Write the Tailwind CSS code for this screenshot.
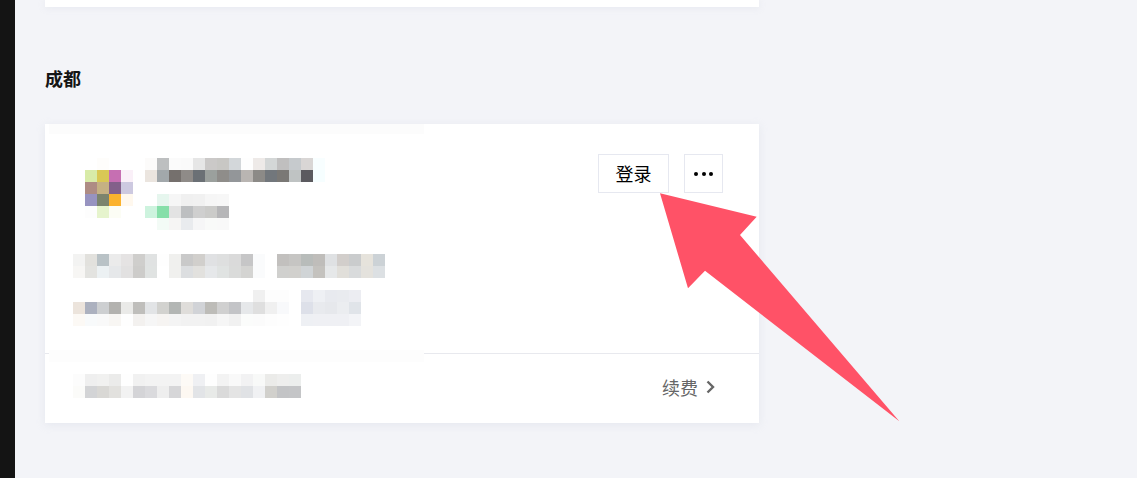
<!doctype html>
<html lang="zh-CN">
<head>
<meta charset="utf-8">
<script src="https://cdn.jsdelivr.net/npm/@tailwindcss/browser@4"></script>
<title>成都</title>
</head>
<body class="m-0">
<div class="relative flex h-[478px] w-[1137px] overflow-hidden bg-[#f3f4f8] font-['Noto_Sans_CJK_SC','Liberation_Sans',sans-serif]">
  <aside class="w-[15px] shrink-0 bg-[#141414]"></aside>
  <main class="w-[714px] ml-[30px] flex flex-col">
    <div class="h-[7px] bg-white shadow-[0_1px_6px_rgba(200,205,220,0.25)]"></div>
    <h2 class="mt-[58px] h-[26px] text-[18px] leading-[26px] font-bold text-[#151515]">成都</h2>
    <section class="relative mt-[33px] h-[299px] bg-white shadow-[0_2px_8px_rgba(200,205,220,0.3)] flex flex-col">
      <div class="h-[230px] shrink-0 flex justify-end items-start gap-[15px] pt-[30px] pr-[36px] border-b border-[#e8e9ee]">
        <button class="w-[71px] h-[39px] border border-[#e6e8f0] bg-white text-[18px] leading-[37px] text-black">登录</button>
        <button class="w-[39px] h-[39px] border border-[#e6e8f0] bg-white flex items-center justify-center gap-[3.5px]">
          <span class="size-[4px] rounded-full bg-black"></span><span class="size-[4px] rounded-full bg-black"></span><span class="size-[4px] rounded-full bg-black"></span>
        </button>
      </div>
      <div class="flex-1 flex items-center justify-end pr-[43px] pb-[4px]">
        <span class="text-[18px] leading-[26px] text-[#666666]">续费</span>
        <svg class="ml-[6px]" width="12" height="14" viewBox="0 0 12 14" fill="none"><path d="M3.5 1.5l5.5 5.5-5.5 5.5" stroke="#666666" stroke-width="2.4"/></svg>
      </div>

      <div class="absolute left-[4px] top-0 w-[375px] h-[238px] flex flex-col overflow-hidden bg-white blur-[0.4px]">
        <div class="h-[10px] w-full shrink-0 bg-[#fcfcfc]"></div>
        <div class="h-[24px] shrink-0"></div>
        <div class="flex h-3 shrink-0 ml-[48px]"><i class="w-3 bg-[#fefdfb]"></i><i class="w-3"></i><i class="w-3"></i><i class="w-3"></i><i class="w-3 bg-[#fcfbfa]"></i><i class="w-3 bg-[#bdbfc0]"></i><i class="w-3 bg-[#fbfbfb]"></i><i class="w-3 bg-[#fafafa]"></i><i class="w-3 bg-[#e6e6e6]"></i><i class="w-3 bg-[#cbc9c8]"></i><i class="w-3 bg-[#c8c7c4]"></i><i class="w-3 bg-[#d3d7da]"></i><i class="w-3 bg-[#fefefe]"></i><i class="w-3 bg-[#eeeae8]"></i><i class="w-3 bg-[#d4d7d7]"></i><i class="w-3 bg-[#c0bfbf]"></i><i class="w-3 bg-[#c6cacd]"></i><i class="w-3 bg-[#d9d6d5]"></i><i class="w-3 bg-[#f8feff]"></i></div>
        <div class="flex h-3 shrink-0 ml-[36px]"><i class="w-3 bg-[#d8eba8]"></i><i class="w-3 bg-[#d9c855]"></i><i class="w-3 bg-[#c66fb2]"></i><i class="w-3 bg-[#faf0f8]"></i><i class="w-3"></i><i class="w-3 bg-[#ebe5df]"></i><i class="w-3 bg-[#a2a8ab]"></i><i class="w-3 bg-[#75706d]"></i><i class="w-3 bg-[#8f8b88]"></i><i class="w-3 bg-[#6b7075]"></i><i class="w-3 bg-[#9ba09d]"></i><i class="w-3 bg-[#8f8d8a]"></i><i class="w-3 bg-[#939699]"></i><i class="w-3 bg-[#b9b5b2]"></i><i class="w-3 bg-[#8c8a87]"></i><i class="w-3 bg-[#72777c]"></i><i class="w-3 bg-[#7a7875]"></i><i class="w-3 bg-[#bfc3c3]"></i><i class="w-3 bg-[#5b5a5f]"></i><i class="w-3 bg-[#f6feff]"></i></div>
        <div class="flex h-3 shrink-0 ml-[36px]"><i class="w-3 bg-[#ae8c84]"></i><i class="w-3 bg-[#c5b183]"></i><i class="w-3 bg-[#83608a]"></i><i class="w-3 bg-[#cdc9e0]"></i></div>
        <div class="flex h-3 shrink-0 ml-[36px]"><i class="w-3 bg-[#9793c0]"></i><i class="w-3 bg-[#7b846d]"></i><i class="w-3 bg-[#fbb22d]"></i><i class="w-3 bg-[#fff8ee]"></i><i class="w-3"></i><i class="w-3"></i><i class="w-3 bg-[#e6f6ee]"></i><i class="w-3 bg-[#f6f6f6]"></i><i class="w-3 bg-[#f0f0f0]"></i><i class="w-3 bg-[#f1f1f1]"></i><i class="w-3 bg-[#f6f6f6]"></i><i class="w-3 bg-[#f7f7f7]"></i></div>
        <div class="flex h-3 shrink-0 ml-[36px]"><i class="w-3 bg-[#fdfdfd]"></i><i class="w-3 bg-[#e6f4cd]"></i><i class="w-3 bg-[#fcfdf5]"></i><i class="w-3"></i><i class="w-3"></i><i class="w-3 bg-[#cdf3de]"></i><i class="w-3 bg-[#86dfa9]"></i><i class="w-3 bg-[#e3e3e3]"></i><i class="w-3 bg-[#bdbfc1]"></i><i class="w-3 bg-[#cfcfcf]"></i><i class="w-3 bg-[#cbcbc9]"></i><i class="w-3 bg-[#b6b6b8]"></i></div>
        <div class="flex h-3 shrink-0 ml-[108px]"><i class="w-3 bg-[#f3fbf6]"></i><i class="w-3 bg-[#f6f5f4]"></i><i class="w-3 bg-[#e9ebee]"></i><i class="w-3 bg-[#f6f6f7]"></i><i class="w-3 bg-[#f9faf9]"></i><i class="w-3 bg-[#f9f9f9]"></i></div>
        <div class="h-[24px] shrink-0"></div>
        <div class="flex h-3 shrink-0 ml-[24px]"><i class="w-3 bg-[#f3f3f2]"></i><i class="w-3 bg-[#e2e1dd]"></i><i class="w-3 bg-[#b9c2c6]"></i><i class="w-3 bg-[#ebebeb]"></i><i class="w-3 bg-[#e5e3e3]"></i><i class="w-3 bg-[#cfcecc]"></i><i class="w-3 bg-[#e0e2e2]"></i><i class="w-3 bg-[#fefefe]"></i><i class="w-3 bg-[#f0f0ee]"></i><i class="w-3 bg-[#c9c9c9]"></i><i class="w-3 bg-[#d1cfcc]"></i><i class="w-3 bg-[#e0e1e3]"></i><i class="w-3 bg-[#dedfdf]"></i><i class="w-3 bg-[#dadada]"></i><i class="w-3 bg-[#c6c6c7]"></i><i class="w-3 bg-[#fafbfc]"></i><i class="w-3"></i><i class="w-3 bg-[#c2c0be]"></i><i class="w-3 bg-[#c6c5c3]"></i><i class="w-3 bg-[#b8bcba]"></i><i class="w-3 bg-[#bfbdba]"></i><i class="w-3 bg-[#dfe1e3]"></i><i class="w-3 bg-[#d2cecb]"></i><i class="w-3 bg-[#cacccd]"></i><i class="w-3 bg-[#e6e3dc]"></i><i class="w-3 bg-[#ccd2d6]"></i></div>
        <div class="flex h-3 shrink-0 ml-[24px]"><i class="w-3 bg-[#f7f6f4]"></i><i class="w-3 bg-[#e3e3e0]"></i><i class="w-3 bg-[#ecf1f3]"></i><i class="w-3 bg-[#e6e8ea]"></i><i class="w-3 bg-[#e2e1e1]"></i><i class="w-3 bg-[#cdccca]"></i><i class="w-3 bg-[#e0e3e2]"></i><i class="w-3"></i><i class="w-3 bg-[#f0f0ee]"></i><i class="w-3 bg-[#dcdee0]"></i><i class="w-3 bg-[#e2e1de]"></i><i class="w-3 bg-[#e6e8ea]"></i><i class="w-3 bg-[#e0e3e2]"></i><i class="w-3 bg-[#dadbda]"></i><i class="w-3 bg-[#d4d4d2]"></i><i class="w-3 bg-[#fafbfc]"></i><i class="w-3"></i><i class="w-3 bg-[#d0d0ce]"></i><i class="w-3 bg-[#d1d0cd]"></i><i class="w-3 bg-[#d0d4d6]"></i><i class="w-3 bg-[#c4c2be]"></i><i class="w-3 bg-[#e6e8e9]"></i><i class="w-3 bg-[#e1dfda]"></i><i class="w-3 bg-[#d9dbdc]"></i><i class="w-3 bg-[#e4e2dd]"></i><i class="w-3 bg-[#dce0e3]"></i></div>
        <div class="h-3 shrink-0"></div>
        <div class="flex h-3 shrink-0 ml-[204px]"><i class="w-3 bg-[#f0f0f0]"></i><i class="w-3 bg-[#fdfdfd]"></i><i class="w-3 bg-[#fdfdfd]"></i><i class="w-3"></i><i class="w-3 bg-[#e6e8ef]"></i><i class="w-3 bg-[#eef0f4]"></i><i class="w-3 bg-[#e8eaef]"></i><i class="w-3 bg-[#e9ebef]"></i><i class="w-3 bg-[#ecedf2]"></i></div>
        <div class="flex h-3 shrink-0 ml-[24px]"><i class="w-3 bg-[#ece4dc]"></i><i class="w-3 bg-[#acb1bf]"></i><i class="w-3 bg-[#cdcfd1]"></i><i class="w-3 bg-[#b3b2af]"></i><i class="w-3 bg-[#eaeae8]"></i><i class="w-3 bg-[#bfbebb]"></i><i class="w-3 bg-[#e2e4e6]"></i><i class="w-3 bg-[#d2d2cf]"></i><i class="w-3 bg-[#b3b6b4]"></i><i class="w-3 bg-[#dfddda]"></i><i class="w-3 bg-[#d1d3d7]"></i><i class="w-3 bg-[#bdbcb8]"></i><i class="w-3 bg-[#d0d0d0]"></i><i class="w-3 bg-[#c3c4c7]"></i><i class="w-3 bg-[#e6e8ea]"></i><i class="w-3 bg-[#dfdfdf]"></i><i class="w-3 bg-[#f0f0f0]"></i><i class="w-3 bg-[#f8f9fb]"></i><i class="w-3"></i><i class="w-3 bg-[#dde0e9]"></i><i class="w-3 bg-[#e8eaee]"></i><i class="w-3 bg-[#e6e8ec]"></i><i class="w-3 bg-[#ebedf0]"></i><i class="w-3 bg-[#e0e4e9]"></i></div>
        <div class="flex h-3 shrink-0 ml-[24px]"><i class="w-3 bg-[#fcf9f5]"></i><i class="w-3 bg-[#f8fafb]"></i><i class="w-3 bg-[#f9f9f9]"></i><i class="w-3 bg-[#f8f6f3]"></i><i class="w-3 bg-[#fefefe]"></i><i class="w-3 bg-[#f3f1ef]"></i><i class="w-3 bg-[#f6f6f6]"></i><i class="w-3 bg-[#f6f4f2]"></i><i class="w-3 bg-[#f4f4f4]"></i><i class="w-3 bg-[#f2f2f2]"></i><i class="w-3 bg-[#f2f2f2]"></i><i class="w-3 bg-[#f1f1f1]"></i><i class="w-3 bg-[#f6f6f6]"></i><i class="w-3 bg-[#f1f1f1]"></i><i class="w-3 bg-[#fbfcfb]"></i><i class="w-3 bg-[#fbfbfb]"></i><i class="w-3 bg-[#fdfdfd]"></i><i class="w-3 bg-[#fefefe]"></i><i class="w-3"></i><i class="w-3 bg-[#eef0f4]"></i><i class="w-3 bg-[#eff0f4]"></i><i class="w-3 bg-[#eff0f4]"></i><i class="w-3 bg-[#eff0f4]"></i><i class="w-3 bg-[#f3f4f7]"></i></div>
        <div class="h-[24px] shrink-0"></div>
        <div class="h-3 w-full shrink-0 bg-[#fdfdfd]"></div>
      </div>

      <div class="absolute left-[28px] top-[250px] flex flex-col blur-[0.4px]">
        <div class="flex h-3"><i class="w-3 bg-[#fcfcfc]"></i><i class="w-3 bg-[#efefef]"></i><i class="w-3 bg-[#f1f1f0]"></i><i class="w-3 bg-[#ebebea]"></i><i class="w-3 bg-[#fefefe]"></i><i class="w-3 bg-[#f1f1f1]"></i><i class="w-3 bg-[#f3f3f3]"></i><i class="w-3 bg-[#f3f3f3]"></i><i class="w-3 bg-[#f3f3f3]"></i><i class="w-3 bg-[#fdfaf6]"></i><i class="w-3 bg-[#eff0f3]"></i><i class="w-3 bg-[#fefefe]"></i><i class="w-3 bg-[#f3f3f3]"></i><i class="w-3 bg-[#f9f9f9]"></i><i class="w-3 bg-[#f2f2f3]"></i><i class="w-3 bg-[#f8f9f8]"></i><i class="w-3 bg-[#ebebe9]"></i><i class="w-3 bg-[#eeeeed]"></i><i class="w-3 bg-[#eceeed]"></i></div>
        <div class="flex h-3"><i class="w-3 bg-[#fbfbf9]"></i><i class="w-3 bg-[#d3d4d6]"></i><i class="w-3 bg-[#d9d8d5]"></i><i class="w-3 bg-[#e2e1de]"></i><i class="w-3 bg-[#f2f2f2]"></i><i class="w-3 bg-[#d4d4d7]"></i><i class="w-3 bg-[#dadadd]"></i><i class="w-3 bg-[#eeeeee]"></i><i class="w-3 bg-[#d6d6d8]"></i><i class="w-3 bg-[#fdf8f2]"></i><i class="w-3 bg-[#e2e4e7]"></i><i class="w-3 bg-[#e8eae8]"></i><i class="w-3 bg-[#dadada]"></i><i class="w-3 bg-[#e4e4e4]"></i><i class="w-3 bg-[#e0e2e5]"></i><i class="w-3 bg-[#f0f1f3]"></i><i class="w-3 bg-[#d1d0cc]"></i><i class="w-3 bg-[#c3c4c6]"></i><i class="w-3 bg-[#c4c5c7]"></i></div>
      </div>
    </section>
  </main>
  <svg class="absolute left-0 top-0 pointer-events-none" width="1137" height="478" viewBox="0 0 1137 478"><polygon points="660,193.3 756.7,216.7 740,235 899.3,421.3 705,270.7 688,288.3" fill="#ff5267"/></svg>
</div>
</body>
</html>
